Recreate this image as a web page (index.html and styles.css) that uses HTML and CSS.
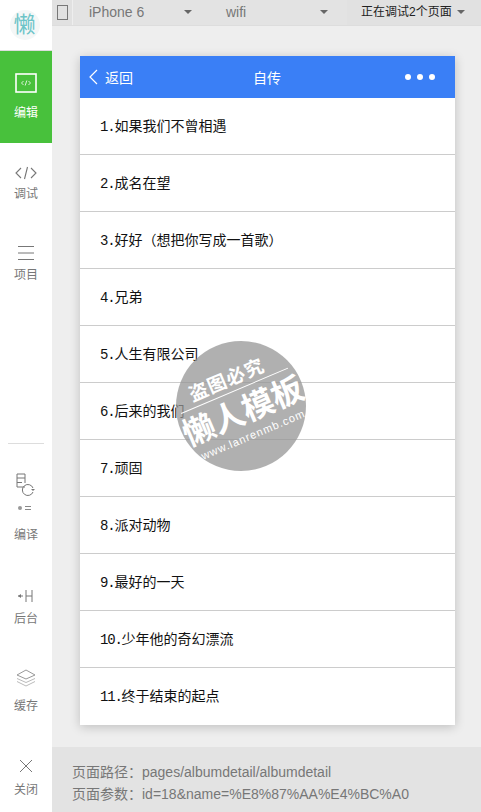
FILE: index.html
```html
<!DOCTYPE html>
<html lang="zh-CN">
<head>
    <meta charset="UTF-8">
    <meta name="viewport" content="width=device-width, initial-scale=1.0">
    <title>调试</title>
    <link rel="stylesheet" href="styles.css">
</head>
<body>
    <div class="app">
        <div class="sidebar">
            <div class="logo-wrap"><div class="logo">懒</div></div>
            <div class="nav-item active tall">
                <svg width="22" height="20" viewBox="0 0 22 20"><rect x="1" y="1" width="20" height="18" fill="none" stroke="#fff" stroke-width="1.6"/><path d="M8.5 8 6.5 10l2 2M13.5 8l2 2-2 2M11.8 7.5l-1.6 5" fill="none" stroke="#fff" stroke-width=".8"/></svg>
                <span>编辑</span>
            </div>
            <div class="nav-item debug">
                <svg width="22" height="14" viewBox="0 0 22 14"><path d="M6 2 1 7l5 5M16 2l5 5-5 5M12.5 1 9.500 13" fill="none" stroke="#777" stroke-width="1.1"/></svg>
                <span>调试</span>
            </div>
            <div class="nav-item project">
                <svg width="18" height="14" viewBox="0 0 18 14"><path d="M1 .5h16M1 7h16M1 13.500h16" stroke="#777" stroke-width="1"/></svg>
                <span>项目</span>
            </div>
            <div class="spacer"></div>
            <div class="divider"></div>
            <div class="nav-item compile">
                <svg width="20" height="40" viewBox="0 0 20 40"><path d="M9 14H1V1h8v9M1 5h8M1 9.500h5" fill="none" stroke="#777"/><path d="M17 15a5.500 5.500 0 1 0 0 4" fill="none" stroke="#777"/><path d="m15 16 4 0-2 2z" fill="#777"/><circle cx="4" cy="35" r="2" fill="#999"/><path d="M9 33.500h6M9 36.500h6" stroke="#888"/></svg>
                <span>编译</span>
            </div>
            <div class="nav-item backend">
                <svg width="16" height="14" viewBox="0 0 16 14"><path d="M0 7h5M8 1v12M14 1v12M8 7h6" stroke="#777" fill="none"/><path d="M0 7l3-2v4z" fill="#777"/></svg>
                <span>后台</span>
            </div>
            <div class="nav-item cache">
                <svg width="20" height="18" viewBox="0 0 20 18"><path d="M10 1 1 6l9 4 9-4z" fill="none" stroke="#999"/><path d="M1 9.500l9 4 9-4M1 12.500l9 4.500 9-4.500" fill="none" stroke="#bbb"/></svg>
                <span>缓存</span>
            </div>
            <div class="nav-item close">
                <svg width="14" height="14" viewBox="0 0 14 14"><path d="M1 1l12 12M13 1 1 13" stroke="#777"/></svg>
                <span>关闭</span>
            </div>
        </div>

        <div class="main">
            <div class="topbar">
                <div class="tool-icon"><div class="device"></div></div>
                <div class="select device-select">iPhone 6<i class="caret"></i></div>
                <div class="select net-select">wifi<i class="caret"></i></div>
                <div class="pages">正在调试2个页面<i class="caret"></i></div>
            </div>

            <div class="stage">
                <div class="phone">
                    <div class="navbar">
                        <div class="back">
                            <svg width="10" height="16" viewBox="0 0 10 16"><path d="M9 1 2 8l7 7" fill="none" stroke="#fff" stroke-width="1.2"/></svg>
                            <span>返回</span>
                        </div>
                        <div class="nav-title">自传</div>
                        <div class="dots"><i></i><i></i><i></i></div>
                    </div>
                    <div class="album-list">
                        <div class="album-row"><span class="no">1.</span>如果我们不曾相遇</div>
                        <div class="album-row"><span class="no">2.</span>成名在望</div>
                        <div class="album-row"><span class="no">3.</span>好好（想把你写成一首歌）</div>
                        <div class="album-row"><span class="no">4.</span>兄弟</div>
                        <div class="album-row"><span class="no">5.</span>人生有限公司</div>
                        <div class="album-row"><span class="no">6.</span>后来的我们</div>
                        <div class="album-row"><span class="no">7.</span>顽固</div>
                        <div class="album-row"><span class="no">8.</span>派对动物</div>
                        <div class="album-row"><span class="no">9.</span>最好的一天</div>
                        <div class="album-row"><span class="no">10.</span>少年他的奇幻漂流</div>
                        <div class="album-row"><span class="no">11.</span>终于结束的起点</div>
                    </div>
                </div>
            </div>

            <div class="page-info">
                <div>页面路径：pages/albumdetail/albumdetail</div>
                <div>页面参数：id=18&amp;name=%E8%87%AA%E4%BC%A0</div>
            </div>
        </div>
    </div>

    <div class="stamp">
        <div class="stamp-inner">
            <div class="stamp-top">盗图必究</div>
            <div class="stamp-line"></div>
            <div class="stamp-main">懒人模板</div>
            <div class="stamp-url">www.lanrenmb.com</div>
        </div>
    </div>
</body>
</html>
```

FILE: styles.css
```css
* { box-sizing: border-box; }
body { margin: 0; font-family: "Liberation Sans", "Noto Sans CJK SC", sans-serif; background: #eee; color: #333; overflow: hidden; }
.app { display: flex; width: 481px; height: 812px; }

.sidebar { width: 52px; background: #fff; display: flex; flex-direction: column; align-items: center; flex-shrink: 0; padding-bottom: 14px; }
.logo-wrap { width: 52px; height: 51px; border-bottom: 1px solid #ddd; display: flex; align-items: center; justify-content: center; padding-right: 3px; }
.logo { width: 30px; height: 30px; border-radius: 50%; background: #f4f7f7; color: #6cc4c8; font-size: 22px; line-height: 30px; text-align: center; }
.nav-item { width: 52px; display: flex; flex-direction: column; align-items: center; font-size: 12px; line-height: 16px; color: #777; flex-shrink: 0; }
.nav-item.tall { height: 92px; background: #48c13c; color: #fff; padding-top: 22px; gap: 12px; }
.nav-item.debug { margin-top: 23px; gap: 6px; }
.nav-item.project { margin-top: 44px; gap: 7px; }
.spacer { flex: 1; }
.divider { width: 36px; height: 1px; background: #ddd; margin-bottom: 29px; }
.nav-item.compile { gap: 14px; }
.nav-item.backend { margin-top: 46px; gap: 8px; }
.nav-item.cache { margin-top: 42px; gap: 11px; }
.nav-item.close { margin-top: 45px; gap: 9px; }

.main { flex: 1; display: flex; flex-direction: column; min-width: 0; }
.topbar { height: 26px; background: #e3e3e3; border-bottom: 1px solid #ddd; display: flex; font-size: 14px; line-height: 25px; color: #777; }
.tool-icon { width: 21px; border-right: 1px solid #eee; display: flex; align-items: center; justify-content: center; margin-right: 1px; background: #e1e1e1; }
.device { width: 11px; height: 15px; border: 1px solid #777; }
.select { position: relative; padding-left: 15px; }
.device-select { width: 121px; }
.net-select { width: 152px; padding-left: 31px; }
.pages { flex: 1; color: #222; font-size: 12px; padding-left: 14px; background: #e1e1e1; white-space: nowrap; }
.caret { display: inline-block; width: 0; height: 0; border-left: 4px solid transparent; border-right: 4px solid transparent; border-top: 4px solid #666; }
.select .caret { position: absolute; top: 10px; }
.device-select .caret { right: 3px; }
.net-select .caret { right: 19px; }
.pages .caret { margin-left: 5px; vertical-align: 2px; }

.stage { flex: 1; padding: 30px 26px 22px 28px; }
.phone { width: 375px; background: #fff; box-shadow: 0 2px 10px rgba(0, 0, 0, 0.2); }
.navbar { height: 42px; background: #3a7ff6; color: #fff; display: flex; align-items: center; position: relative; font-size: 14px; }
.back { display: flex; align-items: center; gap: 7px; padding-left: 8px; }
.nav-title { position: absolute; left: 0; right: 0; padding-right: 1px; text-align: center; }
.dots { margin-left: auto; margin-right: 20px; display: flex; gap: 6px; }
.dots i { width: 6px; height: 6px; border-radius: 50%; background: #fff; }

.album-row { height: 57px; padding-left: 20px; line-height: 56px; font-size: 14px; color: #111; border-bottom: 1px solid #ccc; }
.album-row:last-child { border-bottom: none; }
.no { font-family: "Liberation Mono", monospace; font-size: 14px; letter-spacing: -1.2px; }

.page-info { height: 66px; background: #e3e3e3; padding: 14px 0 0 20px; font-size: 14px; line-height: 22px; color: #777; white-space: nowrap; }

.stamp { position: absolute; left: 176px; top: 341px; width: 130px; height: 130px; border-radius: 50%; background: rgba(150, 150, 150, 0.75); color: #fff; }
.stamp-inner { width: 130px; height: 130px; transform: rotate(-23deg); text-align: center; padding-top: 26px; font-weight: bold; }
.stamp-top { font-size: 19px; line-height: 20px; letter-spacing: 1px; padding-right: 6px; }
.stamp-line { height: 1px; background: #fff; margin: 2px 7px 0; }
.stamp-main { font-size: 32px; line-height: 34px; margin-top: 5px; white-space: nowrap; }
.stamp-url { font-size: 11px; line-height: 12px; margin-top: 2px; font-weight: normal; white-space: nowrap; letter-spacing: 1px; }
```
